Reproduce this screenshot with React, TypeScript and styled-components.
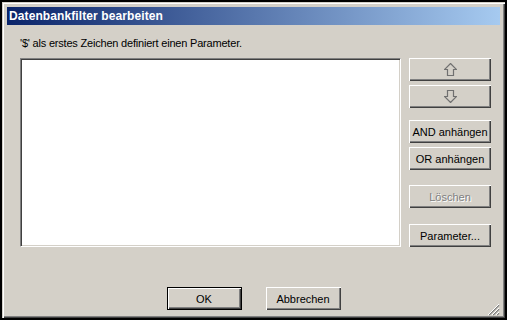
import React from "react";
import styled, { createGlobalStyle, css } from "styled-components";

const GlobalStyle = createGlobalStyle`
  html, body {
    margin: 0;
    padding: 0;
    background: #ffffff;
  }
  body {
    font-family: "Liberation Sans", Arial, sans-serif;
    font-size: 11px;
  }
`;

// window frame
const Frame = styled.div`
  position: relative;
  box-sizing: border-box;
  width: 507px;
  height: 320px;
  border: 2px solid #000;
  padding: 5px;
  background: #d4d0c8;
  box-shadow: inset 1px 1px 0 #d4d0c8, inset 2px 2px 0 #ffffff,
    inset -1px -1px 0 #404040, inset -2px -2px 0 #808080;
  display: flex;
  flex-direction: column;
`;

const TitleBar = styled.div`
  height: 18px;
  display: flex;
  align-items: center;
  padding-left: 2px;
  background: linear-gradient(to right, #0a246a, #a6caf0);
  color: #fff;
  font-weight: bold;
  font-size: 12px;
  letter-spacing: 0.1px;
`;

const Body = styled.div`
  flex: 1;
  display: flex;
  flex-direction: column;
  padding: 12px 0 0 13px;
`;

const Hint = styled.div`
  height: 13px;
  line-height: 13px;
  color: #000;
  letter-spacing: -0.2px;
`;

const MainRow = styled.div`
  display: flex;
  margin-top: 8px;
  height: 189px;
`;

// sunken list box
const ListBox = styled.div`
  box-sizing: border-box;
  width: 381px;
  height: 100%;
  background: #fff;
  border-top: 1px solid #808080;
  border-left: 1px solid #808080;
  border-right: 1px solid #fff;
  border-bottom: 1px solid #fff;
  box-shadow: inset 1px 1px 0 #404040, inset -1px -1px 0 #d4d0c8;
`;

const ButtonColumn = styled.div`
  display: flex;
  flex-direction: column;
  margin-left: 8px;
  width: 82px;
`;

const Button = styled.button<{ $gap?: number; $default?: boolean; $width?: number }>`
  box-sizing: border-box;
  width: ${(p) => p.$width ?? 82}px;
  height: 23px;
  margin: ${(p) => p.$gap ?? 0}px 0 0 0;
  padding: 0;
  display: flex;
  align-items: center;
  justify-content: center;
  background: #d4d0c8;
  color: #000;
  font-family: "Liberation Sans", Arial, sans-serif;
  font-size: 11px;
  border: none;
  border-radius: 0;
  box-shadow: inset 1px 1px 0 #fff, inset -1px -1px 0 #404040,
    inset -2px -2px 0 #808080;
  ${(p) =>
    p.$default &&
    css`
      border: 1px solid #000;
    `}
  &:disabled {
    color: #808080;
    text-shadow: 1px 1px 0 #fff;
  }
`;

const Footer = styled.div`
  display: flex;
  justify-content: center;
  gap: 24px;
  margin-top: 40px;
  margin-left: -13px;
`;

const Grip = styled.svg`
  position: absolute;
  right: 5px;
  bottom: 2px;
`;

const ArrowIcon: React.FC<{ down?: boolean }> = ({ down }) => (
  <svg width="13" height="13" viewBox="0 0 13 13" style={{ transform: down ? "scaleY(-1)" : undefined }}>
    <path
      d="M6.5 0.5 L12.5 6.5 L9.5 6.5 L9.5 12.5 L3.5 12.5 L3.5 6.5 L0.5 6.5 Z"
      fill="#d4d0c8"
      stroke="#707070"
      strokeWidth="1.2"
    />
  </svg>
);

const App: React.FC = () => {
  return (
    <>
      <GlobalStyle />
      <Frame>
        <TitleBar>Datenbankfilter bearbeiten</TitleBar>
        <Body>
          <Hint>'$' als erstes Zeichen definiert einen Parameter.</Hint>
          <MainRow>
            <ListBox />
            <ButtonColumn>
              <Button>
                <ArrowIcon />
              </Button>
              <Button $gap={4}>
                <ArrowIcon down />
              </Button>
              <Button $gap={12}>AND anhängen</Button>
              <Button $gap={4}>OR anhängen</Button>
              <Button $gap={15} disabled>
                Löschen
              </Button>
              <Button $gap={16}>Parameter...</Button>
            </ButtonColumn>
          </MainRow>
          <Footer>
            <Button $width={75} $default>
              OK
            </Button>
            <Button $width={75}>Abbrechen</Button>
          </Footer>
        </Body>
        <Grip width="12" height="12" viewBox="0 0 12 12">
          <path d="M11 1 L1 11 M11 5 L5 11 M11 9 L9 11" stroke="#808080" strokeWidth="1.5" />
          <path d="M11 0 L0 11 M11 4 L4 11 M11 8 L8 11" stroke="#fff" strokeWidth="1" />
        </Grip>
      </Frame>
    </>
  );
};

export default App;
